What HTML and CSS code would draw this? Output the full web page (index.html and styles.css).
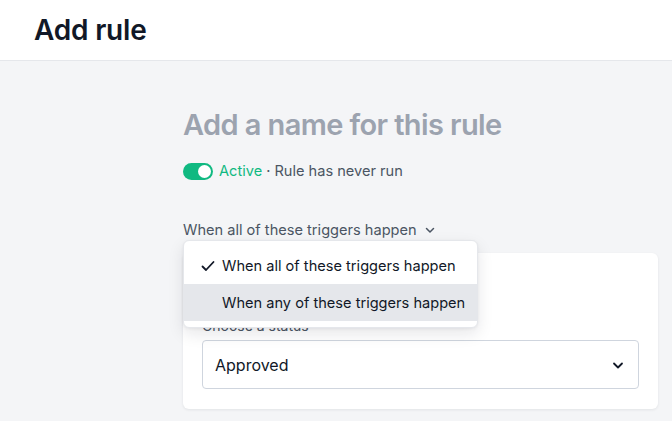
FILE: index.html
```html
<!DOCTYPE html>
<html lang="en">
<head>
<meta charset="utf-8">
<title>Add rule</title>
<link rel="stylesheet" href="styles.css">
</head>
<body>
<header class="page-header">
  <h1 class="page-title">Add rule</h1>
</header>
<main class="page-main">
  <div class="rule-column">
    <h2 class="rule-name">Add a name for this rule</h2>
    <div class="status-row">
      <span class="toggle"><span class="toggle-knob"></span></span>
      <span class="status-active">Active</span>
      <span class="status-meta">· Rule has never run</span>
    </div>
    <div class="trigger-mode">
      <button class="trigger-button">When all of these triggers happen
        <svg class="trigger-chevron" viewBox="0 0 12 12" width="12" height="12"><path d="M2.5 4.5 L6 8 L9.5 4.5" fill="none" stroke="currentColor" stroke-width="1.5" stroke-linecap="round" stroke-linejoin="round"/></svg>
      </button>
      <ul class="menu">
        <li class="menu-item">
          <svg class="menu-check" viewBox="0 0 14 14" width="14" height="14"><path d="M1.5 7.5 L5 11 L12.5 3" fill="none" stroke="currentColor" stroke-width="1.8" stroke-linecap="round" stroke-linejoin="round"/></svg>
          <span>When all of these triggers happen</span>
        </li>
        <li class="menu-item menu-item-active">
          <span class="menu-check"></span>
          <span>When any of these triggers happen</span>
        </li>
      </ul>
    </div>
    <section class="card">
      <label class="field-label">Choose a status</label>
      <div class="select">
        <span>Approved</span>
        <svg class="select-chevron" viewBox="0 0 12 12" width="12" height="12"><path d="M2 4.5 L6 8.5 L10 4.5" fill="none" stroke="currentColor" stroke-width="1.8" stroke-linecap="round" stroke-linejoin="round"/></svg>
      </div>
    </section>
  </div>
</main>
</body>
</html>
```
FILE: styles.css
```css
* { box-sizing: border-box; }
html, body { margin: 0; padding: 0; }
body {
  font-family: Inter, "Noto Sans", "Liberation Sans", sans-serif;
  background: #f4f5f7;
  color: #111827;
  height: 421px;
  overflow: hidden;
}
.page-header {
  height: 61px;
  background: #fff;
  border-bottom: 1px solid #e5e7eb;
  display: flex;
  align-items: center;
  padding-left: 34px;
}
.page-title {
  margin: 0;
  font-size: 28px;
  font-weight: 600;
  letter-spacing: -0.2px;
  color: #111827;
  padding-bottom: 1px;
}
.page-main {
  padding: 47px 14px 0 183px;
}
.rule-column {
  display: flex;
  flex-direction: column;
}
.rule-name {
  margin: 0;
  font-size: 29px;
  line-height: 34px;
  font-weight: 600;
  letter-spacing: -0.6px;
  color: #9ca3af;
}
.status-row {
  margin-top: 18px;
  display: flex;
  align-items: center;
  font-size: 14.6px;
  line-height: 22px;
  gap: 5px;
}
.toggle {
  width: 30px;
  height: 17px;
  border-radius: 9px;
  background: #10b981;
  display: flex;
  align-items: center;
  justify-content: flex-end;
  padding-right: 2px;
  margin-right: 1px;
}
.toggle-knob {
  width: 13px;
  height: 13px;
  border-radius: 50%;
  background: #fff;
}
.status-active { color: #10b981; }
.status-meta { color: #4b5563; margin-left: -1px; }
.trigger-mode {
  position: relative;
  margin-top: 37px;
}
.trigger-button {
  border: 0;
  background: none;
  padding: 0;
  font: inherit;
  font-size: 14.6px;
  line-height: 22px;
  color: #4b5563;
  display: flex;
  align-items: center;
  gap: 7px;
}
.trigger-chevron { color: #4b5563; }
.menu {
  position: absolute;
  z-index: 2;
  top: 21px;
  left: 0;
  width: 295px;
  margin: 0;
  list-style: none;
  padding: 6px 0;
  background: #fff;
  border: 1px solid #e5e7eb;
  border-radius: 6px;
  box-shadow: 0 6px 16px rgba(15, 23, 42, 0.10), 0 1px 3px rgba(15, 23, 42, 0.06);
}
.menu-item {
  display: flex;
  align-items: center;
  gap: 7px;
  height: 37px;
  padding-left: 17px;
  font-size: 14.6px;
  color: #111827;
}
.menu-item-active { background: #e5e7eb; }
.menu-check { width: 14px; height: 14px; color: #111827; flex: none; }
.card {
  margin-top: 12px;
  background: #fff;
  border-radius: 6px;
  box-shadow: 0 1px 3px rgba(15, 23, 42, 0.08);
  padding: 63px 19px 20px 19px;
  display: flex;
  flex-direction: column;
}
.field-label {
  font-size: 14px;
  line-height: 20px;
  color: #4b5563;
  margin-bottom: 4px;
}
.select {
  height: 49px;
  border: 1px solid #cfd5de;
  border-radius: 4px;
  display: flex;
  align-items: center;
  justify-content: space-between;
  padding: 0 14px 0 12px;
  font-size: 16px;
  color: #111827;
}
.select-chevron { color: #111827; }
```
